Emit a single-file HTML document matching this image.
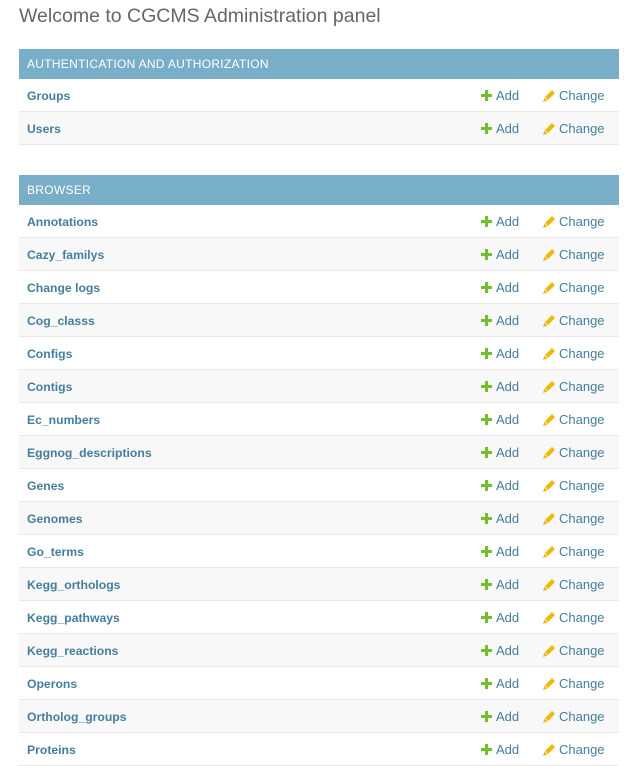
<!DOCTYPE html>
<html><head><style>
body{margin:0;background:#fff;font-family:"Liberation Sans",sans-serif;width:634px;height:761px;overflow:hidden}
h1{position:absolute;left:19px;top:5px;margin:0;font-size:19.5px;font-weight:normal;color:#666;}
.mod{position:absolute;left:19px;width:600px}
.cap{height:30px;background:#79aec8;color:#fff;font-size:12px;line-height:30px;padding-left:8px;letter-spacing:.3px}
.row{height:31px;padding-top:1px;border-bottom:1px solid #e8e8e8;position:relative;font-size:13px;line-height:31px}
.row b{position:absolute;left:8px;top:2px;color:#447e9b;font-weight:bold;font-size:12.2px}
.add{position:absolute;left:462px;color:#447e9b}
.chg{position:absolute;left:524px;color:#447e9b}
.add svg,.chg svg{position:absolute;top:10px}
.add span{margin-left:15px}.chg span{margin-left:16px}
</style></head><body>
<h1>Welcome to CGCMS Administration panel</h1>
<div class="mod" style="top:49px"><div class="cap">AUTHENTICATION AND AUTHORIZATION</div>
<div id="a"></div></div>
<div class="mod" style="top:175px"><div class="cap">BROWSER</div><div id="b"></div></div>
<script>
function row(n){return '<div class="row"><b>'+n+'</b><span class="add"><svg width="11" height="11" viewBox="0 0 11 11"><path d="M4 0h3v4h4v3H7v4H4V7H0V4h4z" fill="#70bf2b"/></svg><span>Add</span></span><span class="chg"><svg width="12" height="12" viewBox="0 0 12 12"><path d="M9 0l3 3-7 7-3-3zM1.5 7.5l3 3L0 12z" fill="#efb80b"/></svg><span>Change</span></span></div>'}
function fill(id,l){var h='';l.forEach(function(n){h+=row(n)});var e=document.getElementById(id);e.outerHTML=h;}
fill('a',['Groups','Users']);
fill('b',['Annotations','Cazy_familys','Change logs','Cog_classs','Configs','Contigs','Ec_numbers','Eggnog_descriptions','Genes','Genomes','Go_terms','Kegg_orthologs','Kegg_pathways','Kegg_reactions','Operons','Ortholog_groups','Proteins']);
</script>
<style>.mod .row:nth-child(even){background:#fff}.mod .row:nth-child(odd){background:#f8f8f8}.mod .cap+.row{background:#fff}</style>
</body></html>
